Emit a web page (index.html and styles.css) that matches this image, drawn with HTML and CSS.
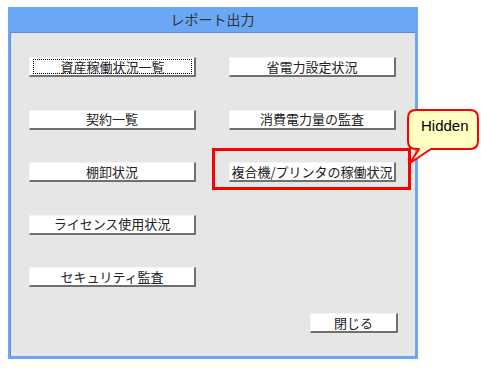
FILE: index.html
```html
<!DOCTYPE html>
<html lang="ja">
<head>
	<meta charset="utf-8">
	<title>レポート出力</title>
	<link rel="stylesheet" href="styles.css">
</head>
<body>
<div class="stage">
	<div class="window">
		<div class="title">レポート出力</div>
		<div class="panel">
			<div class="grid">
				<button class="btn focused"><span>資産稼働状況一覧</span></button>
				<button class="btn">省電力設定状況</button>
				<button class="btn">契約一覧</button>
				<button class="btn">消費電力量の監査</button>
				<button class="btn">棚卸状況</button>
				<button class="btn">複合機/プリンタの稼働状況</button>
				<button class="btn">ライセンス使用状況</button>
				<span></span>
				<button class="btn">セキュリティ監査</button>
			</div>
			<div class="footer">
				<button class="btn close">閉じる</button>
			</div>
		</div>
	</div>

	<!-- highlight + callout over the dialog -->
	<div class="highlight"></div>
	<div class="callout">
		<svg width="80" height="60" viewBox="0 0 80 60">
			<path d="M12,3 H66 Q74,3 74,11 V34 Q74,42 66,42 H27 L6,56 L15,42 H12 Q4,42 4,34 V11 Q4,3 12,3 Z"
			      fill="#ffffc4" stroke="#ff0000" stroke-width="2" stroke-linejoin="round"/>
		</svg>
		<span class="callout-text">Hidden</span>
	</div>
</div>
</body>
</html>
```

FILE: styles.css
```css
body {
	margin: 0;
	background: #ffffff;
	font-family: "Noto Sans CJK JP", "Liberation Sans", sans-serif;
}

.stage {
	position: relative;
	width: 481px;
	height: 369px;
	padding: 7px 0 0 8px;
	box-sizing: border-box;
}

.window {
	width: 410px;
	background: #6aa8f5;
	padding: 0 3px 3px 2px;
	box-sizing: border-box;
}

.title {
	height: 25px;
	line-height: 25px;
	text-align: center;
	font-size: 14px;
	color: #333333;
}

.panel {
	height: 324px;
	background: #e6e6e6;
	border-top: 1px solid #5b8fd6;
	border-left: 1px solid #5b8fd6;
	padding: 24px 0 0 18px;
	box-sizing: border-box;
}

.grid {
	display: grid;
	grid-template-columns: 167px 167px;
	grid-auto-rows: 20px;
	column-gap: 33px;
	row-gap: 32.5px;
}

.btn {
	height: 20px;
	margin: 0;
	padding: 0;
	background: #ffffff;
	border: none;
	border-top: 1px solid #f4f4f4;
	border-left: 1px solid #f4f4f4;
	border-right: 2px solid #707070;
	border-bottom: 2px solid #707070;
	font-family: "Noto Sans CJK JP", sans-serif;
	font-size: 13px;
	line-height: 16px;
	color: #222222;
	box-sizing: border-box;
}

.focused span {
	display: block;
	margin: 1px 2px 1px 3px;
	border: 1px dotted #000000;
	line-height: 13px;
}

.footer {
	display: flex;
	justify-content: flex-end;
	padding-right: 17px;
	margin-top: 26px;
}

.close {
	width: 88px;
}

.highlight {
	position: absolute;
	left: 212px;
	top: 148px;
	width: 199px;
	height: 42px;
	border: 3px solid #ff0000;
	box-sizing: border-box;
}

.callout {
	position: absolute;
	left: 404px;
	top: 107px;
	width: 80px;
	height: 60px;
}

.callout svg {
	display: block;
}

.callout-text {
	position: absolute;
	left: 17px;
	top: 10px;
	font-family: "Liberation Sans", sans-serif;
	font-size: 15px;
	line-height: 17px;
	color: #000000;
}
```
